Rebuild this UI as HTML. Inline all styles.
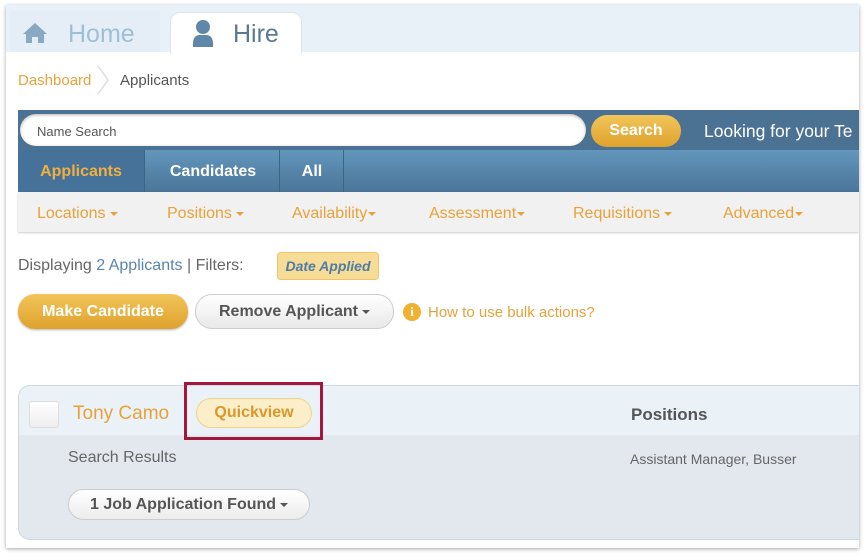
<!DOCTYPE html>
<html><head><style>
*{margin:0;padding:0;box-sizing:border-box}
body{width:867px;height:557px;background:#fff;font-family:"Liberation Sans",sans-serif;position:relative;overflow:hidden}
.frame{position:absolute;left:6px;top:5px;width:853px;height:543px;background:#fff;box-shadow:0 1px 4px rgba(0,0,0,.35);overflow:hidden}
.hdr{position:absolute;left:0;top:0;width:853px;height:47px;background:#e9f1f8}
.a{position:absolute;white-space:nowrap}
.org{color:#e8a23a}
.caret{display:inline-block;width:0;height:0;border-left:4px solid transparent;border-right:4px solid transparent;border-top:4px solid currentColor;vertical-align:middle;margin-left:4px}
.btn{position:absolute;border-radius:17px;font-weight:bold;font-size:16px;text-align:center}
</style></head><body>
<div class="frame">
<div class="hdr"></div>
<div class="a" style="left:4px;top:5px;width:150px;height:42px;background:#e5eef6"></div>
<svg class="a" style="left:16px;top:17px" width="26" height="22" viewBox="0 0 26 22"><path d="M13 1 L1 12 L4 12 L4 21 L10 21 L10 15 L16 15 L16 21 L22 21 L22 12 L25 12 Z" fill="#88a9c1"/></svg>
<div class="a" style="left:62px;top:15px;font-size:25px;color:#9fbfd4">Home</div>
<div class="a" style="left:164px;top:7px;width:132px;height:42px;background:#fff;border-radius:10px 10px 0 0;border:1px solid #dde6ee;border-bottom:none"></div>
<svg class="a" style="left:184px;top:14px" width="26" height="30" viewBox="0 0 26 30"><circle cx="13" cy="8" r="7" fill="#5f87a8"/><path d="M3 28 Q2 17 9 16 L17 16 Q24 17 23 28 Z" fill="#5f87a8"/></svg>
<div class="a" style="left:227px;top:15px;font-size:25px;color:#5a7994">Hire</div>
<div class="a org" style="left:12px;top:67px;font-size:15px">Dashboard</div>
<svg class="a" style="left:90px;top:60px" width="16" height="30"><path d="M2 1 L12 15 L2 29" stroke="#ddd" fill="none" stroke-width="1.5"/></svg>
<div class="a" style="left:114px;top:67px;font-size:15px;color:#555">Applicants</div>
<div class="a" style="left:12px;top:105px;width:841px;height:40px;background:#4b7193"></div>
<div class="a" style="left:14px;top:109px;width:566px;height:32px;background:#fff;border-radius:16px;box-shadow:inset 0 1px 3px rgba(0,0,0,.3)"></div>
<div class="a" style="left:31px;top:119px;font-size:13px;color:#555">Name Search</div>
<div class="btn" style="left:585px;top:110px;width:90px;height:32px;line-height:32px;background:linear-gradient(#f2c55a,#dea22c);color:#fff">Search</div>
<div class="a" style="left:698px;top:116px;font-size:17.5px;color:#fff">Looking for your Te</div>
<div class="a" style="left:12px;top:145px;width:841px;height:42px;background:linear-gradient(#6396bd,#4a7598)"></div>
<div class="a" style="left:12px;top:145px;width:127px;height:42px;background:#46729a;color:#f0b040;font-weight:bold;font-size:16px;line-height:44px;text-align:center;border-right:1px solid #3c6585">Applicants</div>
<div class="a" style="left:141px;top:145px;width:133px;height:42px;color:#fff;font-weight:bold;font-size:16px;line-height:44px;text-align:center;border-right:1px solid #3c6585">Candidates</div>
<div class="a" style="left:275px;top:145px;width:63px;height:42px;color:#fff;font-weight:bold;font-size:16px;line-height:44px;text-align:center;border-right:1px solid #3c6585">All</div>
<div class="a" style="left:12px;top:187px;width:841px;height:40px;background:#f1f1f1;box-shadow:0 1px 2px rgba(0,0,0,.2)"></div>
<div class="a org" style="left:31px;top:200px;font-size:16px">Locations<span class="caret"></span></div>
<div class="a org" style="left:161px;top:200px;font-size:16px">Positions<span class="caret"></span></div>
<div class="a org" style="left:286px;top:200px;font-size:16px">Availability<span class="caret" style="margin-left:1px"></span></div>
<div class="a org" style="left:423px;top:200px;font-size:16px">Assessment<span class="caret" style="margin-left:1px"></span></div>
<div class="a org" style="left:567px;top:200px;font-size:16px">Requisitions<span class="caret"></span></div>
<div class="a org" style="left:717px;top:200px;font-size:16px">Advanced<span class="caret" style="margin-left:1px"></span></div>
<div class="a" style="left:12px;top:252px;font-size:16px;color:#666">Displaying <span style="color:#5a86ad">2 Applicants</span> | Filters:</div>
<div class="a" style="left:271px;top:247px;width:102px;height:28px;background:#f6dc96;border:1px solid #eec466;border-radius:4px;color:#4f7ca5;font-style:italic;font-weight:bold;font-size:14px;line-height:26px;text-align:center">Date Applied</div>
<div class="btn" style="left:12px;top:289px;width:170px;height:35px;line-height:35px;background:linear-gradient(#f2c55a,#dea22c);color:#fff;box-shadow:0 1px 2px rgba(0,0,0,.3)">Make Candidate</div>
<div class="btn" style="left:189px;top:289px;width:199px;height:35px;line-height:33px;background:linear-gradient(#fff,#e8e8e8);border:1px solid #ccc;color:#555">Remove Applicant<span class="caret"></span></div>
<div class="a" style="left:397px;top:298px;width:18px;height:18px;border-radius:50%;background:#f0b030;color:#fff;font-weight:bold;font-size:13px;text-align:center;line-height:18px;font-family:'Liberation Serif',serif">i</div>
<div class="a org" style="left:422px;top:299px;font-size:15px">How to use bulk actions?</div>
<div class="a" style="left:12px;top:380px;width:845px;height:155px;background:#e2e8ee;border:1px solid #cfd8e0;border-radius:12px 0 0 12px"></div>
<div class="a" style="left:13px;top:381px;width:844px;height:49px;background:#eaf1f7;border-radius:11px 0 0 0"></div>
<div class="a" style="left:23px;top:396px;width:30px;height:27px;background:linear-gradient(#fff,#eee);border:1px solid #ddd;border-radius:3px"></div>
<div class="a org" style="left:67px;top:398px;font-size:19px">Tony Camo</div>
<div class="a" style="left:190px;top:393px;width:116px;height:30px;background:#fbeec8;border:1px solid #f0d48a;border-radius:15px;color:#d8982a;font-weight:bold;font-size:16px;line-height:28px;text-align:center">Quickview</div>
<div class="a" style="left:178px;top:377px;width:139px;height:58px;border:3px solid #a4173d"></div>
<div class="a" style="left:625px;top:400px;font-size:17px;font-weight:bold;color:#555">Positions</div>
<div class="a" style="left:62px;top:444px;font-size:16px;color:#666">Search Results</div>
<div class="a" style="left:624px;top:446px;font-size:14px;color:#666">Assistant Manager, Busser</div>
<div class="btn" style="left:62px;top:484px;width:242px;height:31px;line-height:29px;background:linear-gradient(#fff,#ececec);border:1px solid #ccc;color:#555">1 Job Application Found<span class="caret"></span></div>
</div>
</body></html>
